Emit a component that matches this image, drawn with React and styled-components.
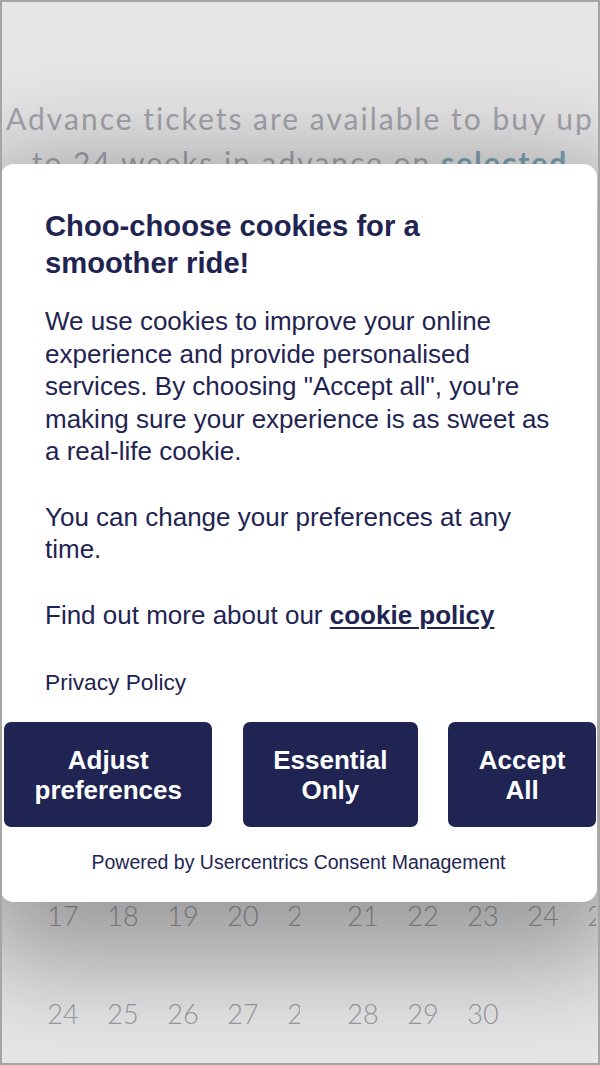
import React from "react";
import styled, { createGlobalStyle } from "styled-components";

const Global = createGlobalStyle`
  html, body { margin: 0; padding: 0; background: #e7e7e7; }
  * { box-sizing: border-box; }
`;

const Frame = styled.div`
  position: relative;
  width: 600px;
  height: 1065px;
  border: 2px solid #a5a5a5;
  background: #e7e7e7;
  overflow: hidden;
  display: flex;
  flex-direction: column;
`;

const Intro = styled.p`
  margin: 94px 0 0;
  text-align: center;
  font-family: Lato, "Open Sans", sans-serif;
  font-size: 30px;
  line-height: 44px;
  color: #a4a5ad;
  letter-spacing: 2px;
`;

const Selected = styled.span`
  color: #7ea4b6;
  font-weight: 700;
`;

const Calendar = styled.div`
  margin-top: auto;
  padding-bottom: 33px;
  display: flex;
  flex-direction: column;
  gap: 66px;
`;

const WeekRow = styled.div`
  display: flex;
`;

const Month = styled.div`
  width: ${(p) => p.$w}px;
  padding-left: ${(p) => p.$pad}px;
  overflow: hidden;
  display: flex;
  flex-shrink: 0;
`;

const Day = styled.span`
  flex: 0 0 60px;
  text-align: center;
  font-family: Lato, "Open Sans", sans-serif;
  font-weight: 300;
  font-size: 27px;
  line-height: 32px;
  color: #9a9ba3;
`;

const Modal = styled.div`
  position: absolute;
  top: 162px;
  left: -2px;
  width: 597px;
  background: #ffffff;
  border-radius: 14px;
  box-shadow: 0 30px 110px 30px rgba(0, 0, 0, 0.34);
  padding: 44px 0 28px;
  display: flex;
  flex-direction: column;
  font-family: "Liberation Sans", Arial, sans-serif;
  color: #1f2452;
`;

const Body = styled.div`
  padding: 0 45px;
`;

const Title = styled.h2`
  margin: 0 0 23px;
  font-size: 29.2px;
  line-height: 37px;
  font-weight: 700;
`;

const Para = styled.p`
  margin: 0 0 ${(p) => p.$mb ?? 33}px;
  font-size: 26px;
  line-height: 32.5px;
`;

const PolicyLink = styled.a`
  color: #1f2452;
  font-weight: 700;
  text-decoration: underline;
  text-decoration-thickness: 2px;
  text-underline-offset: 3px;
`;

const Privacy = styled.div`
  font-size: 22.7px;
  line-height: 29px;
  margin-bottom: 25px;
`;

const Buttons = styled.div`
  display: flex;
  justify-content: space-between;
  padding: 0 1px 0 4px;
`;

const Btn = styled.button`
  border: none;
  border-radius: 7px;
  background: #1f2452;
  color: #ffffff;
  font-family: "Liberation Sans", Arial, sans-serif;
  font-weight: 700;
  font-size: 26px;
  line-height: 30px;
  padding: 22.5px 30.5px;
  text-align: center;
`;

const Powered = styled.div`
  margin-top: 23px;
  text-align: center;
  font-size: 19.5px;
  line-height: 24px;
`;

const week1a = ["17", "18", "19", "20", "21"];
const week1b = ["21", "22", "23", "24", "25"];
const week2a = ["24", "25", "26", "27", "28"];
const week2b = ["28", "29", "30"];

export default function App() {
  return (
    <>
      <Global />
      <Frame>
        <Intro>
          Advance tickets are available to buy up to 24 weeks in advance on{" "}
          <Selected>selected</Selected> routes.
        </Intro>
        <Calendar>
          <WeekRow>
            <Month $w={298} $pad={31}>
              {week1a.map((d, i) => (
                <Day key={i}>{d}</Day>
              ))}
            </Month>
            <Month $w={296} $pad={33}>
              {week1b.map((d, i) => (
                <Day key={i}>{d}</Day>
              ))}
            </Month>
          </WeekRow>
          <WeekRow>
            <Month $w={298} $pad={31}>
              {week2a.map((d, i) => (
                <Day key={i}>{d}</Day>
              ))}
            </Month>
            <Month $w={296} $pad={33}>
              {week2b.map((d, i) => (
                <Day key={i}>{d}</Day>
              ))}
            </Month>
          </WeekRow>
        </Calendar>

        <Modal role="dialog">
          <Body>
            <Title>Choo-choose cookies for a smoother ride!</Title>
            <Para>
              We use cookies to improve your online experience and provide
              personalised services. By choosing "Accept all", you're making
              sure your experience is as sweet as a real-life cookie.
            </Para>
            <Para>You can change your preferences at any time.</Para>
            <Para $mb={37}>
              Find out more about our <PolicyLink>cookie policy</PolicyLink>
            </Para>
            <Privacy>Privacy Policy</Privacy>
          </Body>
          <Buttons>
            <Btn>
              Adjust
              <br />
              preferences
            </Btn>
            <Btn>
              Essential
              <br />
              Only
            </Btn>
            <Btn>
              Accept
              <br />
              All
            </Btn>
          </Buttons>
          <Powered>Powered by Usercentrics Consent Management</Powered>
        </Modal>
      </Frame>
    </>
  );
}
